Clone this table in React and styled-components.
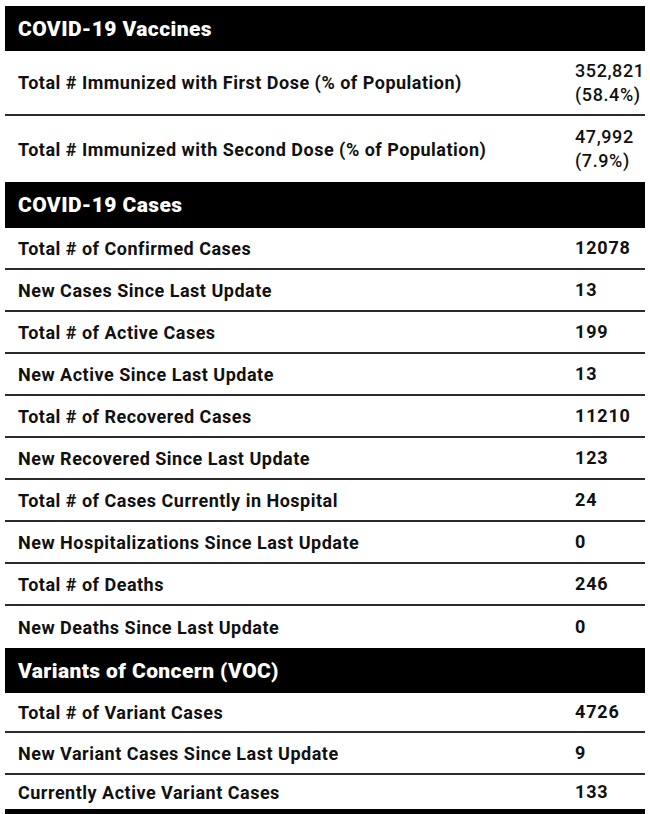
import React from "react";
import styled, { createGlobalStyle } from "styled-components";

const Global = createGlobalStyle`
  html, body { margin: 0; padding: 0; background: #fff; }
  body { font-family: Roboto, "Liberation Sans", Arial, sans-serif; color: #111; }
`;

const Page = styled.div`
  padding: 6px 5px 0 5px;
  height: 808px;
  overflow: hidden;
`;

const Table = styled.div`
  display: flex;
  flex-direction: column;
`;

const Header = styled.div`
  background: #000;
  color: #fff;
  height: ${(p) => p.$h || 45}px;
  display: flex;
  align-items: center;
  padding-left: 13px;
  font-family: Roboto, "Liberation Sans", sans-serif;
  font-weight: 900;
  font-size: 21px;
  letter-spacing: 0.4px;
`;

const Row = styled.div`
  display: grid;
  grid-template-columns: 1fr 70px;
  align-items: center;
  height: ${(p) => p.$h || 42}px;
  box-sizing: border-box;
  border-bottom: ${(p) => (p.$last ? "none" : "2px solid #2b2b2b")};
`;

const Label = styled.div`
  padding-left: 13px;
  font-weight: 700;
  font-size: 18px;
  letter-spacing: 0.5px;
  color: #111;
`;

const Value = styled.div`
  font-weight: ${(p) => (p.$light ? 500 : 700)};
  font-size: 18px;
  line-height: 24px;
  color: #111;
  letter-spacing: ${(p) => (p.$light ? "0.6px" : "0.8px")};
`;

const sections = [
  {
    title: "COVID-19 Vaccines",
    h: 45,
    rows: [
      { label: "Total # Immunized with First Dose (% of Population)", value: ["352,821", "(58.4%)"], h: 65 },
      { label: "Total # Immunized with Second Dose (% of Population)", value: ["47,992", "(7.9%)"], h: 66 },
    ],
  },
  {
    title: "COVID-19 Cases",
    h: 46,
    rows: [
      { label: "Total # of Confirmed Cases", value: "12078" },
      { label: "New Cases Since Last Update", value: "13" },
      { label: "Total # of Active Cases", value: "199" },
      { label: "New Active Since Last Update", value: "13" },
      { label: "Total # of Recovered Cases", value: "11210" },
      { label: "New Recovered Since Last Update", value: "123" },
      { label: "Total # of Cases Currently in Hospital", value: "24" },
      { label: "New Hospitalizations Since Last Update", value: "0" },
      { label: "Total # of Deaths", value: "246" },
      { label: "New Deaths Since Last Update", value: "0" },
    ],
  },
  {
    title: "Variants of Concern (VOC)",
    h: 45,
    rows: [
      { label: "Total # of Variant Cases", value: "4726", h: 40 },
      { label: "New Variant Cases Since Last Update", value: "9", h: 42 },
      { label: "Currently Active Variant Cases", value: "133", h: 34 },
    ],
  },
];

export default function App() {
  return (
    <>
      <Global />
      <Page>
        <Table>
          {sections.map((s) => (
            <React.Fragment key={s.title}>
              <Header $h={s.h}>{s.title}</Header>
              {s.rows.map((r, i) => (
                <Row key={r.label} $h={r.h} $last={i === s.rows.length - 1}>
                  <Label>{r.label}</Label>
                  <Value $light={Array.isArray(r.value)}>
                    {Array.isArray(r.value)
                      ? r.value.map((v) => <div key={v}>{v}</div>)
                      : r.value}
                  </Value>
                </Row>
              ))}
            </React.Fragment>
          ))}
          <Header $h={45} />
        </Table>
      </Page>
    </>
  );
}
